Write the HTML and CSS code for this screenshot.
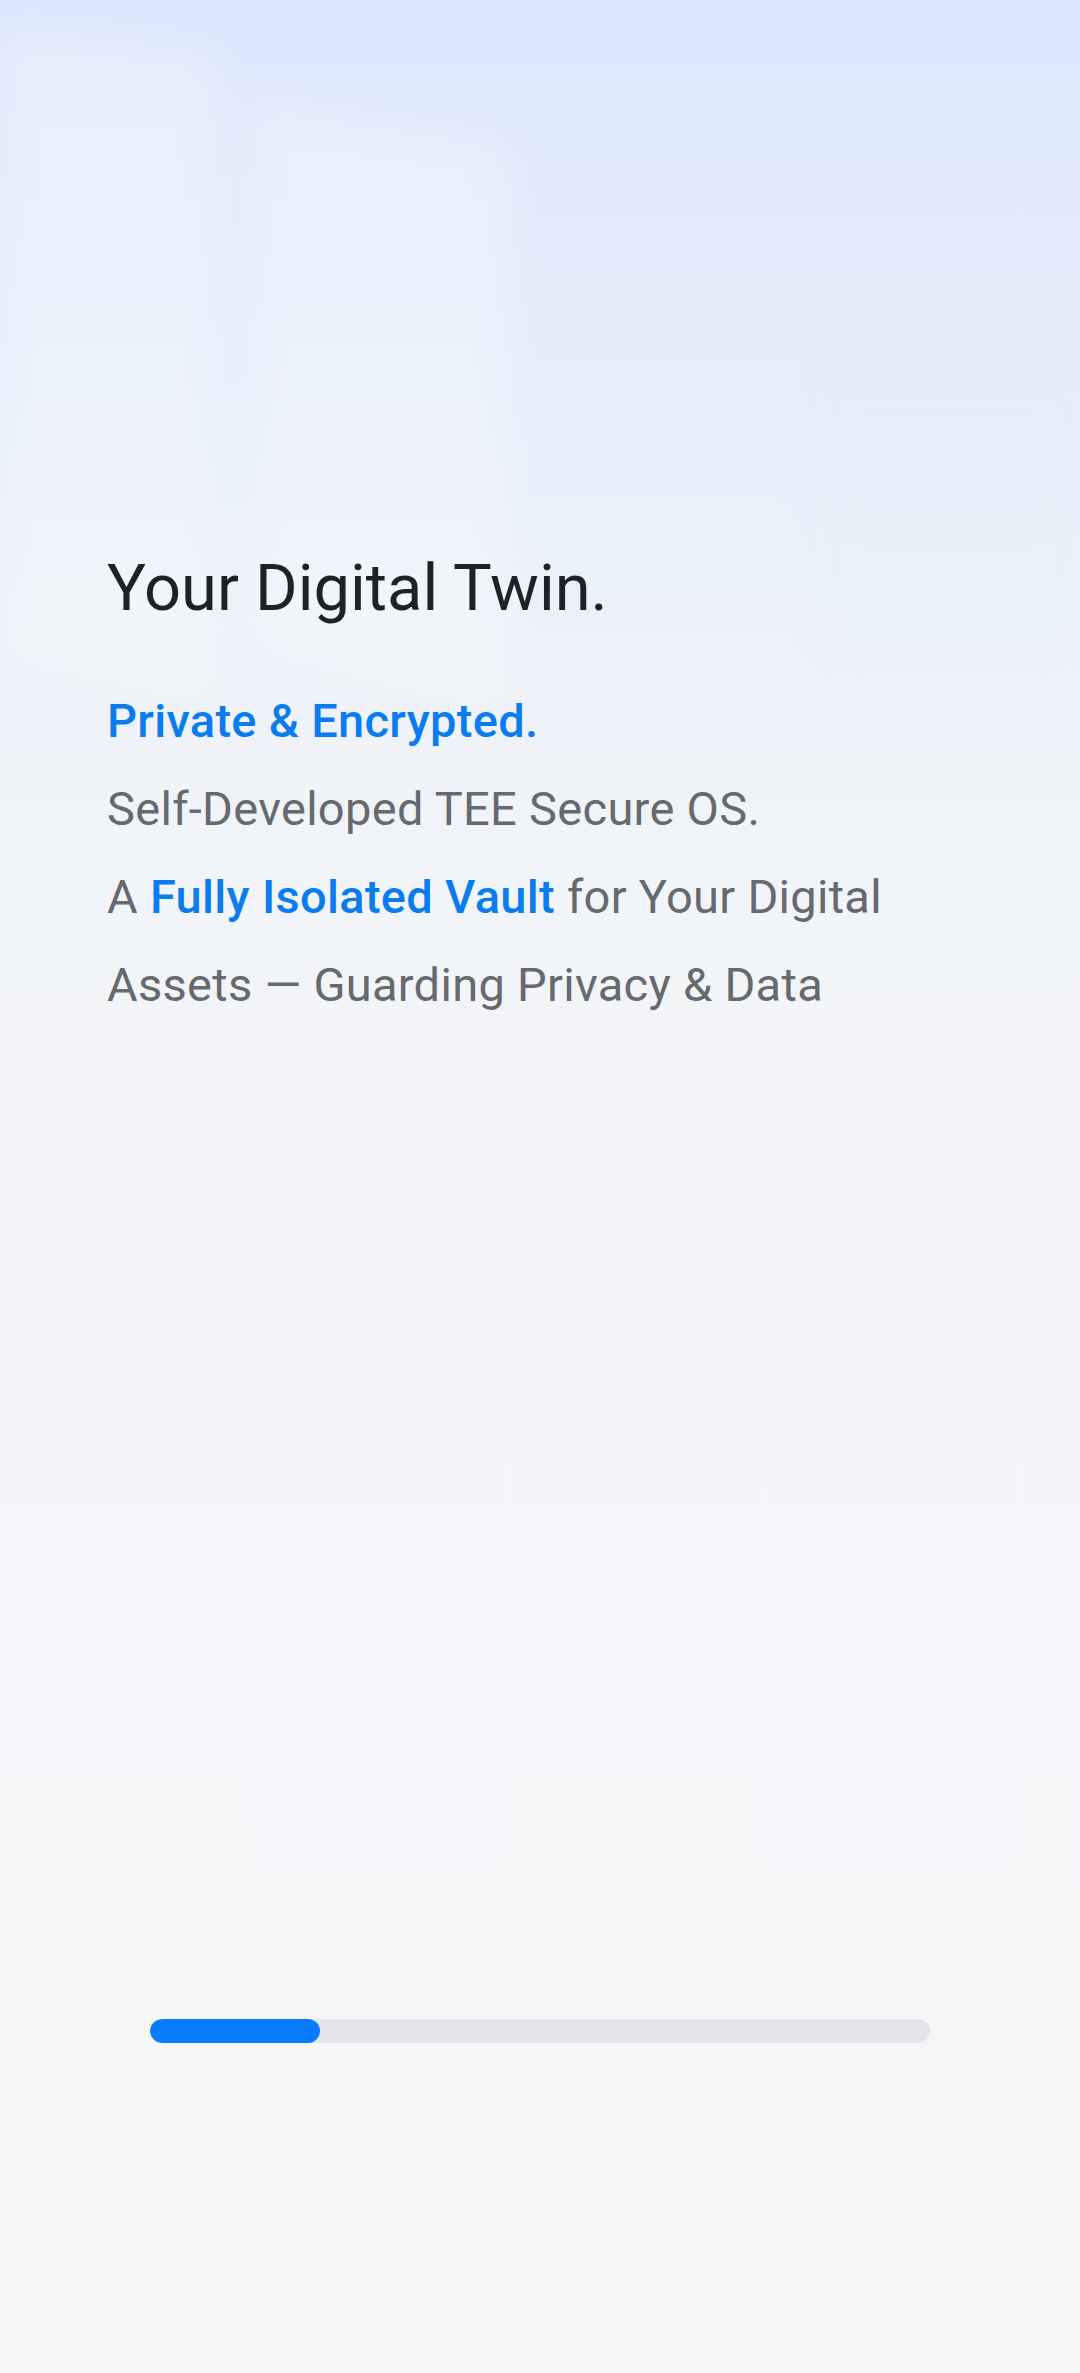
FILE: index.html
```html
<!DOCTYPE html>
<html lang="en">
<head>
    <meta charset="UTF-8">
    <meta name="viewport" content="width=device-width, initial-scale=1.0">
    <title>Your Digital Twin</title>
    <link rel="stylesheet" href="styles.css">
</head>
<body>
    <div class="backdrop">
        <div class="pane pane-left"></div>
        <div class="pane pane-mid"></div>
        <div class="pane pane-right"></div>
    </div>
    <main class="screen">
        <section class="intro">
            <h1 class="title">Your Digital Twin.</h1>
            <p class="line accent">Private &amp; Encrypted.</p>
            <p class="line">Self-Developed TEE Secure OS.</p>
            <p class="line">A <span class="accent">Fully Isolated Vault</span> for Your Digital<br>Assets — Guarding Privacy &amp; Data</p>
        </section>
        <div class="progress">
            <div class="progress-fill"></div>
        </div>
    </main>
</body>
</html>
```

FILE: styles.css
```css
html, body {
    margin: 0;
    height: 100%;
}
body {
    font-family: Roboto, "Noto Sans", sans-serif;
    background: linear-gradient(180deg, #dbe7fc 0%, #e6eefa 18%, #eff3f9 30%, #f3f5f8 45%, #f4f6f8 100%);
    overflow: hidden;
    position: relative;
}
/* faint blurred shapes behind the text */
.backdrop {
    position: absolute;
    inset: 0;
    pointer-events: none;
    filter: blur(22px);
}
.pane {
    position: absolute;
    background: rgba(255, 255, 255, 0.28);
}
.pane-left {
    left: 0;
    top: 40px;
    width: 220px;
    height: 640px;
    transform: skewY(8deg);
}
.pane-mid {
    left: 250px;
    top: 120px;
    width: 260px;
    height: 560px;
    transform: skewY(10deg);
}
.pane-right {
    left: 820px;
    top: 380px;
    width: 260px;
    height: 300px;
    background: rgba(224, 232, 246, 0.15);
}
.screen {
    position: relative;
    display: flex;
    flex-direction: column;
    justify-content: space-between;
    height: 100%;
    box-sizing: border-box;
    padding: 547px 107px 330px;
}
.title {
    margin: 0 0 48px;
    font-size: 65px;
    font-weight: 400;
    line-height: 82px;
    color: #1e2226;
}
.line {
    margin: 0;
    font-size: 47px;
    letter-spacing: 0.3px;
    line-height: 88px;
    color: #66696e;
}
.accent {
    color: #0b7cf0;
    font-weight: 500;
}
.progress {
    margin: 0 43px;
    height: 24px;
    border-radius: 12px;
    background: #e2e4e7;
    overflow: hidden;
}
.progress-fill {
    width: 170px;
    height: 100%;
    border-radius: 12px;
    background: #0a7aff;
}
```
